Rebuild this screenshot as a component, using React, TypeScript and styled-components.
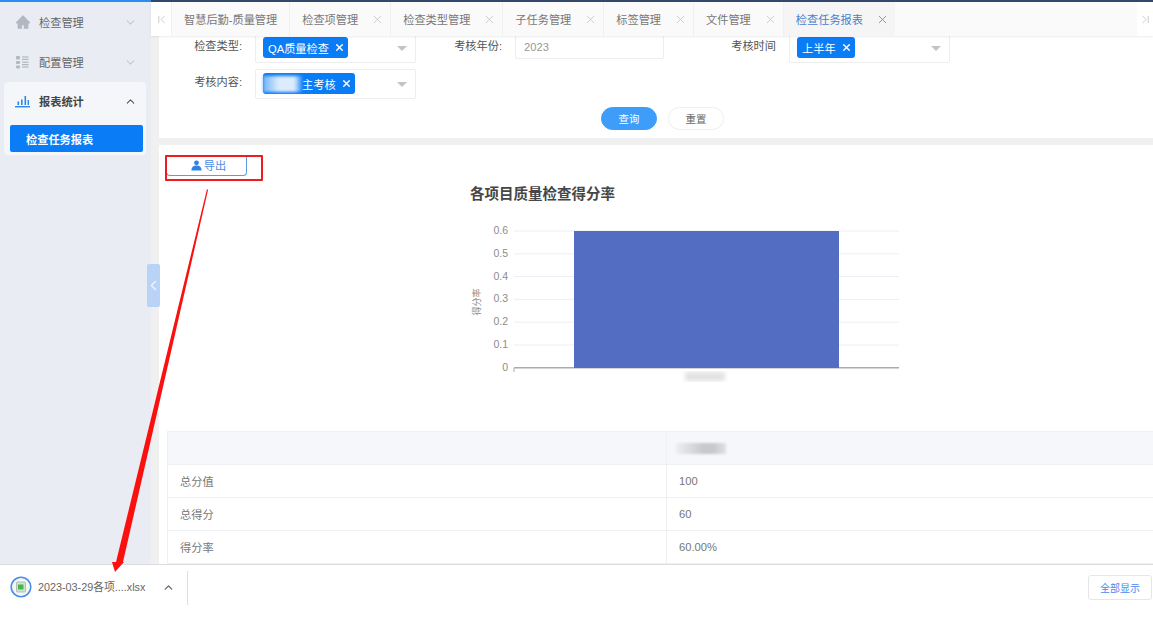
import React from 'react'
import styled, { createGlobalStyle } from 'styled-components'
import { ChevronDown, ChevronFirst, ChevronLast, ChevronLeft, ChevronUp, X } from 'lucide-react'
import { AiFillHome } from 'react-icons/ai'

const GlobalStyle = createGlobalStyle`
  html, body {
    margin: 0;
    padding: 0;
    background: #fff;
    overflow: hidden;
  }
  * {
    box-sizing: border-box;
  }
`

const tabs = [
  { name: '检查项管理' },
  { name: '检查类型管理' },
  { name: '子任务管理' },
  { name: '标签管理' },
  { name: '文件管理' },
]

const yTicks = ['0.6', '0.5', '0.4', '0.3', '0.2', '0.1', '0']

const rows = [
  { name: '总分值', value: '100' },
  { name: '总得分', value: '60' },
  { name: '得分率', value: '60.00%' },
]

function ListIcon() {
  return (
    <svg width="14" height="14" viewBox="0 0 14 14" fill="#b3b7c2">
      <rect x="1" y="1" width="4" height="3.4" rx="0.8" />
      <rect x="1" y="6" width="4" height="3" rx="0.8" />
      <rect x="1" y="10.4" width="4" height="3" rx="0.8" />
      <rect x="7" y="1.4" width="6.5" height="1.2" />
      <rect x="7" y="3.8" width="6.5" height="1.2" />
      <rect x="7" y="6.6" width="6.5" height="1.2" />
      <rect x="7" y="9" width="6.5" height="1.2" />
      <rect x="7" y="11.4" width="6.5" height="1.2" />
    </svg>
  )
}

function BarsIcon() {
  return (
    <svg width="15" height="13" viewBox="0 0 15 13" fill="#2f86ea">
      <rect x="0" y="11" width="15" height="1.4" />
      <rect x="2.5" y="6.5" width="1.6" height="3.5" />
      <rect x="6" y="4.5" width="1.6" height="5.5" />
      <rect x="9.5" y="1" width="1.6" height="9" />
      <rect x="12.6" y="5" width="1.4" height="5" />
    </svg>
  )
}

function UserIcon() {
  return (
    <svg width="11" height="11" viewBox="0 0 11 11" fill="#2f80e8">
      <circle cx="5.5" cy="2.8" r="2.4" />
      <path d="M0.4 10.6c0-3.4 1.8-5 5.1-5s5.1 1.6 5.1 5z" />
    </svg>
  )
}

function FileIcon() {
  return (
    <svg width="22" height="22" viewBox="0 0 22 22">
      <circle cx="11" cy="11" r="9.8" fill="#f4f6f4" stroke="#4a8ee8" strokeWidth="1.6" />
      <rect x="6.5" y="6" width="9" height="10" rx="1" fill="#cfe6cf" stroke="#9a9a9a" strokeWidth="0.6" />
      <rect x="8" y="8.5" width="5.5" height="5" fill="#45b649" />
    </svg>
  )
}

export default function App() {
  return (
    <Page>
      <GlobalStyle />
      <TopArea>
        <Sidebar>
          <MenuRow>
            <MenuIcon><AiFillHome size={16} color="#b3b7c2" /></MenuIcon>
            <MenuName>检查管理</MenuName>
            <ChevronDown size={13} color="#c4c8d0" />
          </MenuRow>
          <MenuRow>
            <MenuIcon><ListIcon /></MenuIcon>
            <MenuName>配置管理</MenuName>
            <ChevronDown size={13} color="#c4c8d0" />
          </MenuRow>
          <MenuPanel>
            <MenuRow $short>
              <MenuIcon><BarsIcon /></MenuIcon>
              <MenuName $strong>报表统计</MenuName>
              <ChevronUp size={13} color="#555" />
            </MenuRow>
            <SubItem>检查任务报表</SubItem>
          </MenuPanel>
        </Sidebar>

        <Main>
          <TabBar>
            <EdgeButton><ChevronFirst size={13} strokeWidth={1.4} /></EdgeButton>
            <Tab>智慧后勤-质量管理</Tab>
            {tabs.map(t => (
              <Tab key={t.name}>
                {t.name}
                <X size={13} color="#c8c8c8" strokeWidth={1.6} />
              </Tab>
            ))}
            <Tab $active>
              检查任务报表
              <X size={13} color="#5b8fd8" strokeWidth={1.6} />
            </Tab>
            <EdgeButton $right><ChevronLast size={13} strokeWidth={1.4} /></EdgeButton>
          </TabBar>

          <Content>
            <FilterCard>
              <FilterGrid>
                <FieldLabel>检查类型:</FieldLabel>
                <SelectBox>
                  <Tag>QA质量检查<X size={11} strokeWidth={3} /></Tag>
                  <Caret />
                </SelectBox>
                <FieldLabel>考核年份:</FieldLabel>
                <YearInput>2023</YearInput>
                <FieldLabel>考核时间</FieldLabel>
                <SelectBox>
                  <Tag>上半年<X size={11} strokeWidth={3} /></Tag>
                  <Caret />
                </SelectBox>
                <FieldLabel $low>考核内容:</FieldLabel>
                <SelectBox>
                  <Tag><Smudge />主考核<X size={11} strokeWidth={3} /></Tag>
                  <Caret />
                </SelectBox>
              </FilterGrid>
              <ButtonRow>
                <PillButton $primary>查询</PillButton>
                <PillButton>重置</PillButton>
              </ButtonRow>
            </FilterCard>

            <ReportCard>
              <ExportButton><UserIcon />导出</ExportButton>
              <ChartTitle>各项目质量检查得分率</ChartTitle>
              <ChartSvg width="994" height="219" viewBox="0 0 994 219">
                <defs>
                  <filter id="censor"><feGaussianBlur stdDeviation="2" /></filter>
                </defs>
                {yTicks.map((t, i) => {
                  const y = 19 + i * 22.8
                  return (
                    <g key={t}>
                      <line x1="355" x2="740" y1={y} y2={y} stroke={t === '0' ? '#aaaab2' : '#eceef6'} strokeWidth={t === '0' ? 1.4 : 1} />
                      <AxisText x="349" y={y + 3} textAnchor="end">{t}</AxisText>
                    </g>
                  )
                })}
                <line x1="355" x2="355" y1="156" y2="160" stroke="#aaaab2" />
                <rect x="415" y="19" width="265" height="137" fill="#536dc3" />
                <AxisText $small x="0" y="0" transform="translate(321 90) rotate(-90)" textAnchor="middle">得分率</AxisText>
                <rect x="526" y="160" width="40" height="9" fill="#e2e2e2" filter="url(#censor)" />
              </ChartSvg>
              <DataTable>
                <colgroup>
                  <col width="499" />
                  <col />
                </colgroup>
                <thead>
                  <tr>
                    <HeadCell />
                    <HeadCell><Blot /></HeadCell>
                  </tr>
                </thead>
                <tbody>
                  {rows.map(r => (
                    <tr key={r.name}>
                      <BodyCell>{r.name}</BodyCell>
                      <BodyCell>{r.value}</BodyCell>
                    </tr>
                  ))}
                </tbody>
              </DataTable>
            </ReportCard>
          </Content>
        </Main>
      </TopArea>

      <DownloadBar>
        <FileIcon />
        <FileName>2023-03-29各项....xlsx</FileName>
        <ChevronUp size={13} color="#666" strokeWidth={2.4} />
        <BarDivider />
        <ShowAll>全部显示</ShowAll>
      </DownloadBar>

      <CollapseHandle><ChevronLeft size={17} color="#f2f7ff" strokeWidth={1.6} /></CollapseHandle>
      <RedBox />
      <ArrowLayer width="1153" height="633" viewBox="0 0 1153 633">
        <polygon points="207,189 208,190 123,562 124,562 115,572 112,562 116,562" fill="#fb1010" />
      </ArrowLayer>
    </Page>
  )
}

const Page = styled.div`
  position: relative;
  width: 1153px;
  height: 633px;
  overflow: hidden;
  display: flex;
  flex-flow: column;
  font-family: "Liberation Sans", "Noto Sans CJK SC", sans-serif;
  font-size: 11.2px;
  color: #666;
  background: #fff;
`

const TopArea = styled.div`
  display: flex;
  height: 564px;
  flex-shrink: 0;
`

const Sidebar = styled.div`
  width: 151px;
  flex-shrink: 0;
  padding-right: 5px;
  background: #e9ecf3;
  border-top: 2px solid #2a8cf0;
`

const MenuRow = styled.div<{ $short?: boolean }>`
  display: flex;
  align-items: center;
  height: ${p => (p.$short ? '38px' : '40px')};
  padding: 0 9px 0 15px;
`

const MenuIcon = styled.div`
  display: flex;
  justify-content: flex-start;
  width: 24px;
`

const MenuName = styled.div<{ $strong?: boolean }>`
  flex: 1;
  color: ${p => (p.$strong ? '#444' : '#666')};
  font-weight: ${p => (p.$strong ? 'bold' : 'normal')};
`

const MenuPanel = styled.div`
  height: 73px;
  margin-left: 4px;
  border-radius: 4px;
  background: #f4f6fa;

  ${MenuRow} {
    padding-left: 11px;
  }
`

const SubItem = styled.div`
  display: flex;
  align-items: center;
  height: 27px;
  margin: 5px 3px 0 6px;
  padding-left: 16px;
  border-radius: 2px;
  color: #fff;
  background: #0a7cf5;
  font-weight: bold;
`

const Main = styled.div`
  flex: 1;
  min-width: 0;
  display: flex;
  flex-flow: column;
  background: #f0f0f0;
  border-top: 2px solid #33486b;
`

const TabBar = styled.div`
  position: relative;
  z-index: 1;
  display: flex;
  height: 34px;
  flex-shrink: 0;
  background: #fafafa;
  box-shadow: 0 1px 2px rgba(0, 0, 0, 0.08);
`

const EdgeButton = styled.div<{ $right?: boolean }>`
  display: flex;
  align-items: center;
  justify-content: center;
  width: ${p => (p.$right ? '16px' : '20px')};
  margin-left: ${p => (p.$right ? 'auto' : '0')};
  color: #bbb;
  background: #fff;
`

const Tab = styled.div<{ $active?: boolean }>`
  display: flex;
  align-items: center;
  gap: 13px;
  padding: 0 6px 0 12px;
  border-left: 1px solid #f0f0f0;
  color: ${p => (p.$active ? '#4a80cc' : '#777')};
  background: ${p => (p.$active ? '#f5f5f5' : 'transparent')};
  white-space: nowrap;

  &:nth-child(2) {
    padding-right: 12px;
  }
`

const Content = styled.div`
  flex: 1;
  min-height: 0;
  overflow: hidden;
  padding-left: 8px;
`

const FilterCard = styled.div`
  height: 102px;
  overflow: hidden;
  background: #fff;
`

const FilterGrid = styled.div`
  display: grid;
  grid-template-columns: 96px 161px 99px 149px 125px 161px;
  grid-template-rows: 33px 30px;
  row-gap: 6px;
  margin-top: -6px;
`

const FieldLabel = styled.div<{ $low?: boolean }>`
  padding-right: 13px;
  line-height: ${p => (p.$low ? '27px' : '33px')};
  text-align: right;
  color: #555;
`

const SelectBox = styled.div`
  display: flex;
  align-items: flex-end;
  justify-content: space-between;
  padding: 0 8px 4px 7px;
  border: 1px solid #eeeeee;
  border-radius: 2px;
`

const Tag = styled.div`
  display: flex;
  align-items: center;
  gap: 5px;
  height: 21px;
  padding: 0 3px 0 5px;
  border-radius: 3px;
  color: #fff;
  background: #0a7cf5;
`

const Smudge = styled.span`
  width: 39px;
  height: 16px;
  margin: 0 -5px 0 -5px;
  background: linear-gradient(90deg, #6fb2fa, #dcecfd 40%, #dcecfd 80%, #2e90f6);
  filter: blur(1.5px);
`

const Caret = styled.div`
  width: 0;
  height: 0;
  margin: 0 0 7px;
  border-style: solid;
  border-width: 5px 5px 0;
  border-color: #c4c4c4 transparent transparent;
`

const YearInput = styled.div`
  height: 29px;
  padding: 10px 8px 0;
  border: 1px solid #eeeeee;
  border-radius: 2px;
  color: #999;
`

const ButtonRow = styled.div`
  display: flex;
  justify-content: center;
  gap: 11px;
  margin-top: 8px;
  padding-left: 13px;
`

const PillButton = styled.div<{ $primary?: boolean }>`
  display: flex;
  align-items: center;
  justify-content: center;
  width: 56px;
  height: 23px;
  border: 1px solid ${p => (p.$primary ? '#3f9dfa' : '#eeeeee')};
  border-radius: 12px;
  color: ${p => (p.$primary ? '#fff' : '#666')};
  background: ${p => (p.$primary ? '#3f9dfa' : '#fff')};
  font-size: 10.4px;
`

const ReportCard = styled.div`
  margin-top: 7px;
  padding-top: 10px;
  background: #fff;
`

const ExportButton = styled.div`
  display: flex;
  align-items: center;
  justify-content: center;
  gap: 2px;
  width: 81px;
  height: 21px;
  margin-left: 7px;
  padding-left: 4px;
  border: 1px solid #5a9bea;
  border-top: none;
  border-radius: 0 0 4px 4px;
  color: #4a8ce8;
`

const ChartTitle = styled.div`
  height: 36px;
  margin-left: 311px;
  padding-top: 8px;
  color: #464646;
  font-size: 14.5px;
  font-weight: bold;
  line-height: 20px;
`

const ChartSvg = styled.svg`
  display: block;
`

const AxisText = styled.text<{ $small?: boolean }>`
  fill: ${p => (p.$small ? '#888' : '#8c8c8c')};
  font-size: ${p => (p.$small ? '9px' : '10.5px')};
`

const DataTable = styled.table`
  width: 1000px;
  margin-left: 8px;
  border-collapse: collapse;
  table-layout: fixed;
`

const HeadCell = styled.th`
  height: 33px;
  padding: 0 12px;
  border: 1px solid #eff0f2;
  background: #f5f7fa;
  text-align: left;
`

const BodyCell = styled.td`
  height: 33px;
  padding: 0 12px;
  border: 1px solid #eff0f2;
  color: #777;
`

const Blot = styled.div`
  width: 50px;
  height: 11px;
  margin-left: -3px;
  background: linear-gradient(90deg, #eceeef, #c8c9cb 55%, #c8c9cb 75%, #dfe2e4);
  filter: blur(0.8px);
`

const DownloadBar = styled.div`
  position: relative;
  z-index: 2;
  flex: 1;
  display: flex;
  align-items: flex-start;
  padding: 11px 1px 0 10px;
  border-top: 1px solid #dcdcdc;
  background: #fff;

  > svg:nth-of-type(2) {
    margin: 5px 0 0 17px;
  }
`

const FileName = styled.div`
  margin: 4px 0 0 6px;
  color: #666;
  font-size: 10.8px;
  line-height: 14px;
  white-space: nowrap;
`

const BarDivider = styled.div`
  width: 1px;
  height: 34px;
  margin: -5px 0 0 12px;
  background: #dddddd;
`

const ShowAll = styled.div`
  display: flex;
  align-items: center;
  justify-content: center;
  width: 64px;
  height: 25px;
  margin: -1px 0 0 auto;
  border: 1px solid #e6e6e6;
  border-radius: 3px;
  color: #4a86f0;
  font-size: 10px;
`

const CollapseHandle = styled.div`
  position: absolute;
  left: 147px;
  top: 264px;
  z-index: 3;
  display: flex;
  align-items: center;
  justify-content: center;
  width: 13px;
  height: 43px;
  border-radius: 2px;
  background: #b8d3f5;

  svg {
    flex-shrink: 0;
  }
`

const RedBox = styled.div`
  position: absolute;
  left: 165px;
  top: 155px;
  z-index: 4;
  width: 98px;
  height: 26px;
  border: 2px solid #ee1c1c;
  border-radius: 1px;
`

const ArrowLayer = styled.svg`
  position: absolute;
  left: 0;
  top: 0;
  z-index: 5;
  pointer-events: none;
`
